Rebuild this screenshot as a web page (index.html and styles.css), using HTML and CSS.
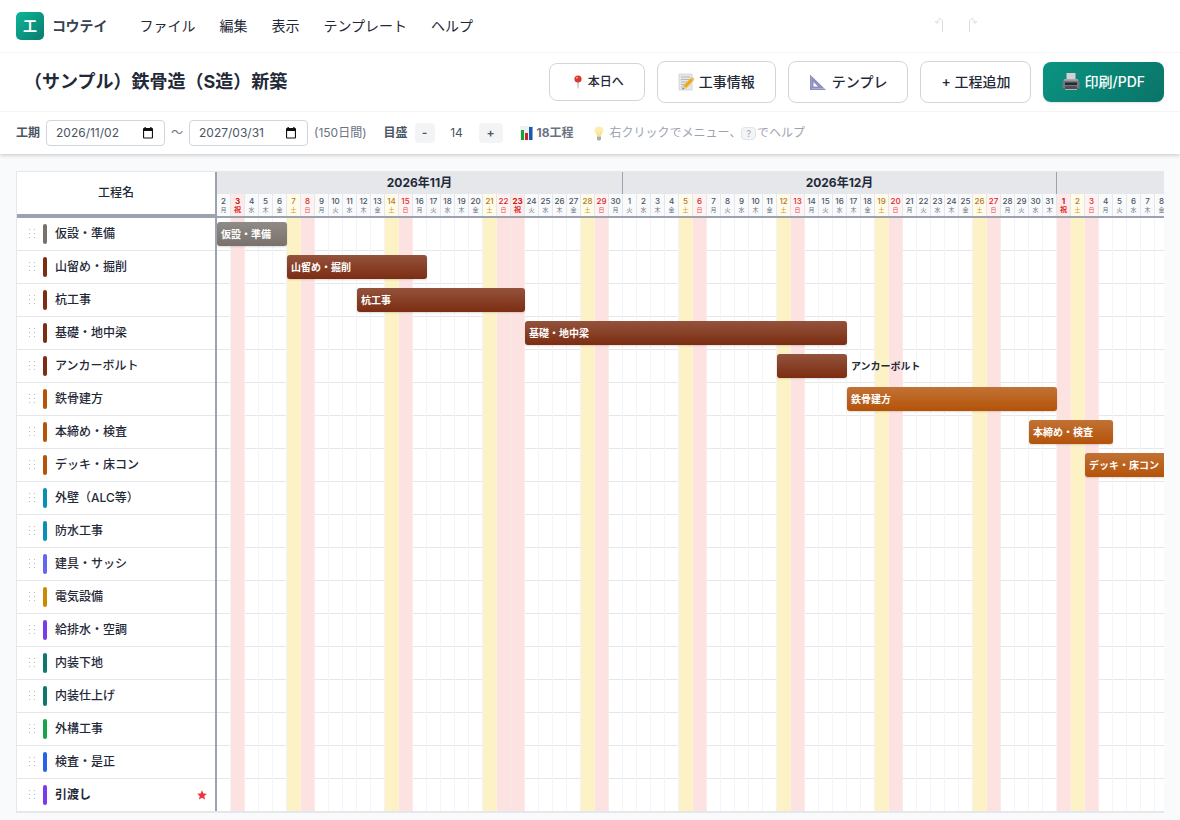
FILE: index.html
```html
<!DOCTYPE html>
<html lang="ja">
<head>
<meta charset="utf-8">
<meta name="viewport" content="width=device-width, initial-scale=1">
<title>コウテイ</title>
<link rel="stylesheet" href="styles.css">
</head>
<body>
<header class="app-header">
  <div class="menubar">
    <div class="brand"><span class="logo">工</span><span>コウテイ</span></div>
    <nav class="menu">
      <button type="button">ファイル</button>
      <button type="button">編集</button>
      <button type="button">表示</button>
      <button type="button">テンプレート</button>
      <button type="button">ヘルプ</button>
    </nav>
    <div class="history">
      <button type="button" aria-label="元に戻す" disabled><svg width="12" height="18" viewBox="0 0 12 18"><path d="M8.500 15V5C8.500 1 3.500.5 3 5M1 4 3 6.500 5 4" /></svg></button>
      <button type="button" aria-label="やり直し" disabled><svg width="12" height="18" viewBox="0 0 12 18"><path d="M1.500 15V5C1.500 1 6.500.5 7 5M5 4 7 6.500 9 4" /></svg></button>
    </div>
  </div>
  <div class="titlebar">
    <h1>（サンプル）鉄骨造（S造）新築</h1>
    <div class="actions">
      <button type="button" class="btn btn-today">
        <svg width="12" height="14" viewBox="0 0 12 14"><path d="M5.500 6h1l-.2 7.500h-.6z" fill="#8b949e"/><circle cx="6" cy="4" r="3.600" fill="#d9382f"/><circle cx="5" cy="2.800" r="1.100" fill="#f58a80"/></svg>本日へ</button>
      <button type="button" class="btn">
        <svg width="17" height="18" viewBox="0 0 17 18"><path d="M1 1h13v16H1z" fill="#e6e7e8" stroke="#c4c7ca" stroke-width=".6"/><path d="M3 4h9M3 6.500h9M3 9h7M3 11.500h4M3 14h3" stroke="#a9adb2" stroke-width=".8"/><path d="M5.500 12.500 12.500 5l3 2.700-7 7.300-3.800 1z" fill="#f3b52b"/><path d="m12.500 5 1.200-1.200q1.700.3 2.800 2.600l-1 1.300z" fill="#e9c46e"/><path d="m7 13.700 7-7.300" stroke="#d68c18" stroke-width=".9"/><path d="m5.500 12.500 3 2.500-4.200 1.400z" fill="#e8c79a"/><path d="m4.900 15 1 .8-1.600.6z" fill="#333"/></svg>工事情報</button>
      <button type="button" class="btn">
        <svg width="19" height="18" viewBox="0 0 19 18"><path fill-rule="evenodd" d="M1 1.500 17 17H1zM4.500 9v4.500H9z" fill="#8f90bd"/><path d="M2 5h1M2 7h1M2 9h1M2 11h1M2 13h1M3 15.500h12" stroke="#b5b6d7" stroke-width=".8" fill="none"/></svg>テンプレ</button>
      <button type="button" class="btn">+ 工程追加</button>
      <button type="button" class="btn btn-primary">
        <svg width="18" height="18" viewBox="0 0 18 18"><path d="M4.500 0h9v7h-9z" fill="#cfd3d8"/><path d="M2.500 6h13l2 3v5.500q0 1-1 1h-15q-1 0-1-1V9z" fill="#747980"/><path d="M2.500 6h13l1 1.800h-15z" fill="#a2a7ad"/><path d="M3 9.500h12v2.500H3z" fill="#24292e"/><path d="M3.500 13h11l1 3.500h-13z" fill="#4b5056"/><path d="M3 16.500h12" stroke="#aeb4ba"/></svg>印刷/PDF</button>
    </div>
  </div>
  <div class="toolbar">
    <label class="field-label" for="start">工期</label>
    <span class="date-field"><input id="start" type="text" value="2026/11/02"><svg width="10" height="12" viewBox="0 0 10 12"><path fill-rule="evenodd" d="M1.500 0h1.300v1h4.400V0h1.300v1H9q1 0 1 1v8.500q0 1-1 1H1q-1 0-1-1V2q0-1 1-1h.5zM1.100 4v6.400h7.800V4z" fill="#111"/></svg></span>
    <span class="tilde">〜</span>
    <span class="date-field"><input id="end" type="text" value="2027/03/31" aria-label="工期の終わり"><svg width="10" height="12" viewBox="0 0 10 12"><path fill-rule="evenodd" d="M1.500 0h1.300v1h4.400V0h1.300v1H9q1 0 1 1v8.500q0 1-1 1H1q-1 0-1-1V2q0-1 1-1h.5zM1.100 4v6.400h7.800V4z" fill="#111"/></svg></span>
    <span class="duration">(150日間)</span>
    <div class="scale">
      <span class="field-label">目盛</span>
      <button type="button" class="step" aria-label="縮小">-</button>
      <span class="scale-value">14</span>
      <button type="button" class="step step-plus" aria-label="拡大">+</button>
    </div>
    <span class="count"><svg width="13" height="14" viewBox="0 0 13 14"><path d="M0 0h13v14H0z" fill="#edf1f5"/><path d="M1 4h3v10H1z" fill="#16a52f"/><path d="M5 7h3v7H5z" fill="#c4262e"/><path d="M9 1h3.500v13H9z" fill="#1d58b0"/></svg>18工程</span>
    <span class="hint"><svg width="10" height="15" viewBox="0 0 10 15"><path d="M5 .5c-2.700 0-4.600 1.900-4.600 4.300C.4 7 2.500 8 2.800 10.500h4.400C7.500 8 9.600 7 9.600 4.800 9.600 2.400 7.700.5 5 .5z" fill="#fdeeb0"/><path d="M3.500 5.500 4.300 10h1.400l.8-4.500" fill="none" stroke="#f2d26c" stroke-width=".7"/><path d="M3 10.500h4v2.700L5.800 14.500H4.200L3 13.200z" fill="#a9aeb3"/></svg><span>右クリックでメニュー、<kbd>?</kbd>でヘルプ</span></span>
  </div>
</header>
<main>
  <section class="chart">
    <div class="names">
      <div class="names-head">工程名</div>
      <ul id="names"></ul>
    </div>
    <div class="timeline" id="timeline">
      <div class="months" id="months"></div>
      <div class="days" id="days"></div>
      <div class="grid">
        <div class="shade" id="shade"></div>
        <div class="rows" id="rows"></div>
      </div>
    </div>
  </section>
</main>
<script src="chart.js"></script>
</body>
</html>
```
FILE: styles.css
```css
* { box-sizing: border-box; }
body {
  margin: 0;
  background: #f9fafc;
  color: #1f2937;
  font: 12px/18px Inter, "Noto Sans CJK JP", sans-serif;
}
button, input { font: inherit; color: inherit; }
button { padding: 0; border: 0; background: none; white-space: nowrap; cursor: pointer; }
svg { flex: none; display: block; }

.app-header { background: #fff; box-shadow: 0 1px 4px rgba(0, 0, 0, .22); }
.menubar {
  display: flex; align-items: center;
  height: 53px; padding: 0 16px;
  border-bottom: 1px solid #f3f4f6;
}
.brand { display: flex; align-items: center; gap: 8px; font-size: 14px; font-weight: 700; color: #374151; }
.logo {
  display: grid; place-items: center;
  width: 28px; height: 28px; border-radius: 5px;
  background: linear-gradient(135deg, #0cb598, #0a7c6e);
  color: #fff;
}
.menu { display: flex; gap: 24px; margin-left: 32px; font-size: 14px; }
.history { display: flex; gap: 22px; margin: 0 184px 0 auto; }
.history path { fill: none; stroke: #d9dce0; stroke-width: 1; }

.titlebar {
  display: flex; align-items: center; justify-content: space-between;
  height: 59px; padding: 0 16px 0 24px;
  border-bottom: 1px solid #f3f4f6;
}
h1 { margin: 0; font-size: 18px; line-height: 28px; font-weight: 700; white-space: nowrap; }
.actions { display: flex; align-items: center; gap: 12px; }
.btn {
  display: flex; align-items: center; gap: 4px;
  height: 42px; padding: 0 20px;
  border: 1px solid #d1d5db; border-radius: 8px;
  background: #fff; font-size: 14px; font-weight: 500;
}
.btn-today { height: 38px; font-size: 12px; padding: 0 20px 0 22px; }
.btn-primary {
  height: 40px; padding: 0 19px; border: 0; color: #fff;
  background: linear-gradient(135deg, #0a9482, #0a7468);
  box-shadow: 0 1px 2px rgba(0, 0, 0, .12);
}

.toolbar { display: flex; align-items: center; height: 42px; padding: 0 16px; color: #4b5563; white-space: nowrap; }
.field-label { font-weight: 600; }
.date-field {
  display: flex; align-items: center; justify-content: space-between;
  width: 119px; height: 26px; margin-left: 6px; padding: 0 11px 0 9px;
  border: 1px solid #d1d5db; border-radius: 4px;
}
.date-field input { width: 76px; padding: 0; border: 0; outline: 0; background: none; }
.tilde { margin-left: 6px; color: #6b7280; }
.duration { margin-left: 6px; color: #6b7280; }
.scale { display: flex; align-items: center; margin-left: 17px; }
.step { width: 20px; height: 20px; border-radius: 4px; background: #f3f4f6; font-weight: 600; }
.step-plus { width: 24px; }
.scale .step:first-of-type { margin-left: 7px; }
.scale-value { width: 44px; text-align: center; }
.count { display: flex; align-items: center; gap: 4px; margin-left: 17px; font-weight: 700; color: #6b7280; }
.hint { display: flex; align-items: center; gap: 6px; margin-left: 20px; color: #9ca3af; }
kbd {
  display: inline-block; padding: 0 4px; margin-right: 1px;
  border: 1px solid #e0e3e7; border-radius: 4px; background: #f3f4f6;
  font: 9px/11px Inter, sans-serif;
}

main { padding: 17px 16px 8px; }
.chart {
  display: flex; background: #fff;
  border: solid #e5e7eb; border-width: 1px 0 2px 1px;
}
.names { flex: none; width: 200px; border-right: 2px solid #9ca3af; }
.names-head {
  display: grid; place-items: center;
  height: 46px; border-bottom: 4px solid #9ca3af; font-weight: 500;
}
ul { margin: 0; padding: 0; list-style: none; }
.name {
  display: flex; align-items: center; height: 33px; padding: 0 8px 0 12px;
  border-bottom: 1px solid #e5e7eb; font-weight: 500;
}
.name:last-child, .row:last-child { height: 32px; border-bottom: 0; }
.name.milestone { font-weight: 700; }
.grip { fill: #b6bbc3; }
.swatch { width: 4px; height: 20px; margin: 0 8px 0 7px; border-radius: 2px; }
.star { margin-left: auto; fill: #ef343e; }

.timeline { flex: 1; min-width: 0; overflow: hidden; }
.months, .days, .shade, .row { display: grid; grid-auto-columns: 14px; grid-auto-flow: column; }
.months { background: #e5e7eb; }
.month { height: 22px; border-right: 1px solid #9ca3af; text-align: center; font-weight: 700; line-height: 22px; }
.month:last-child { border-right: 0; }
.days { height: 24px; border-bottom: 2px solid #9ca3af; }
.day {
  display: flex; flex-direction: column; align-items: center;
  padding-top: 3px; border-right: 1px solid #e5e7eb; background: #f9fafb;
  color: #4b5563; font-size: 8px; line-height: 9px; font-weight: 500;
}
.day small { font-size: 6px; line-height: 8px; font-weight: 400; color: #6b7280; }
.day.sat { background: #fefce8; color: #b7791f; }
.day.sun { background: #fef2f2; color: #dc2626; }
.day.holiday { background: #fee9e9; color: #c4161c; font-weight: 700; }
.day.sat small { color: #d09a2c; }
.day.sun small { color: #ef4444; }
.day.holiday small { font-size: 7px; font-weight: 700; color: #dc2626; }

.grid { position: relative; }
.shade { position: absolute; inset: 0; }
.shade i { border-right: 1px solid #f3f4f6; }
.shade .sat { background: #fdf1c6; border-color: #fbf3d4; }
.shade .sun, .shade .holiday { background: #fde2e2; border-color: #fbeaea; }
.row { height: 33px; align-items: start; border-bottom: 1px solid #e5e7eb; }
.bar {
  position: relative; height: 24px; margin-top: 4px; padding: 0 4px; border-radius: 3px;
  background-image: linear-gradient(rgba(255, 255, 255, .18), rgba(255, 255, 255, 0));
  box-shadow: 0 1px 2px rgba(0, 0, 0, .14);
  color: #fff; font-size: 10px; line-height: 24px; font-weight: 600; white-space: nowrap;
}
.bar-label { position: relative; margin-top: 4px; padding-left: 4px; font-size: 10px; line-height: 24px; font-weight: 600; white-space: nowrap; }
```
FILE: chart.js
```js
const DAY_WIDTH = 14;
const TOTAL_DAYS = 150;
const tasks = [
  { name: "仮設・準備", color: "#78716c", start: 0, days: 5 },
  { name: "山留め・掘削", color: "#7c2d12", start: 5, days: 10 },
  { name: "杭工事", color: "#7c2d12", start: 10, days: 12 },
  { name: "基礎・地中梁", color: "#7c2d12", start: 22, days: 23 },
  { name: "アンカーボルト", color: "#7c2d12", start: 40, days: 5, outside: true },
  { name: "鉄骨建方", color: "#b45309", start: 45, days: 15 },
  { name: "本締め・検査", color: "#b45309", start: 58, days: 6 },
  { name: "デッキ・床コン", color: "#b45309", start: 62, days: 12 },
  { name: "外壁（ALC等）", color: "#0891b2" },
  { name: "防水工事", color: "#0891b2" },
  { name: "建具・サッシ", color: "#6366f1" },
  { name: "電気設備", color: "#ca8a04" },
  { name: "給排水・空調", color: "#7c3aed" },
  { name: "内装下地", color: "#0f766e" },
  { name: "内装仕上げ", color: "#0f766e" },
  { name: "外構工事", color: "#16a34a" },
  { name: "検査・是正", color: "#2563eb" },
  { name: "引渡し", color: "#7c3aed", milestone: true },
];
const holidays = ["2026-11-3", "2026-11-23", "2027-1-1", "2027-1-11", "2027-2-11", "2027-2-23", "2027-3-22"];
const weekdays = "日月火水木金土";
const byId = id => document.getElementById(id);

const grip = '<svg class="grip" width="7" height="10" viewBox="0 0 7 10">' +
  [0, 4, 8].map(y => `<path d="M0 ${y}h1v1H0zM5 ${y}h1v1H5z"/>`).join("") + "</svg>";
const star = '<svg class="star" width="10" height="10" viewBox="0 0 10 10"><path d="M5 .3 6.400 3.400l3.400.4-2.500 2.300.7 3.400L5 7.800 2 9.500l.7-3.400L.2 3.800l3.400-.4z"/></svg>';

byId("names").innerHTML = tasks.map(t =>
  `<li class="name${t.milestone ? " milestone" : ""}">${grip}<span class="swatch" style="background:${t.color}"></span>${t.name}${t.milestone ? star : ""}</li>`
).join("");

// Only the days that fit in the window are drawn.
function drawTimeline() {
  const shown = Math.min(TOTAL_DAYS, Math.ceil(byId("timeline").clientWidth / DAY_WIDTH));
  let days = "", shade = "";
  const months = [];
  for (let i = 0; i < shown; i++) {
    const d = new Date(2026, 10, 2 + i);
    const y = d.getFullYear(), m = d.getMonth() + 1, w = d.getDay();
    const holiday = holidays.includes(`${y}-${m}-${d.getDate()}`);
    const kind = holiday ? "holiday" : w === 6 ? "sat" : w === 0 ? "sun" : "";
    days += `<div class="day ${kind}">${d.getDate()}<small>${holiday ? "祝" : weekdays[w]}</small></div>`;
    shade += `<i class="${kind}"></i>`;
    const label = `${y}年${m}月`;
    const last = months[months.length - 1];
    if (last && last.label === label) last.span++;
    else months.push({ label, span: 1 });
  }
  byId("days").innerHTML = days;
  byId("shade").innerHTML = shade;
  byId("months").innerHTML = months.map(m =>
    `<div class="month" style="grid-column:span ${m.span}">${m.span > 15 ? m.label : ""}</div>`).join("");

  byId("rows").innerHTML = tasks.map(t => {
    if (!t.days || t.start >= shown) return '<div class="row"></div>';
    const end = t.start + t.days + 1;
    const bar = `<div class="bar" style="grid-column:${t.start + 1}/${end};background-color:${t.color}">${t.outside ? "" : t.name}</div>`;
    const label = t.outside ? `<div class="bar-label" style="grid-column:${end}/span 8">${t.name}</div>` : "";
    return `<div class="row">${bar}${label}</div>`;
  }).join("");
}
drawTimeline();
window.addEventListener("resize", drawTimeline);
```
